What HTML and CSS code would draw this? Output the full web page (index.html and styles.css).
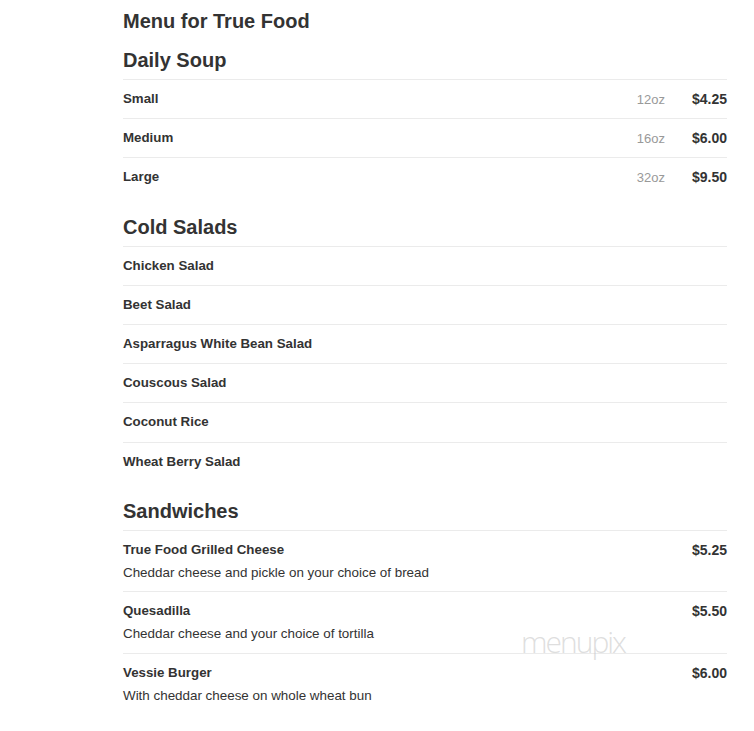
FILE: index.html
```html
<!DOCTYPE html>
<html>
<head>
<meta charset="utf-8">
<link rel="stylesheet" href="styles.css">
</head>
<body>
<div class="page">
  <h1 class="title">Menu for True Food</h1>

  <section class="section first">
    <h2 class="sec-title">Daily Soup</h2>
    <div class="row"><span class="name">Small</span><span class="size">12oz</span><span class="price">$4.25</span></div>
    <div class="row"><span class="name">Medium</span><span class="size">16oz</span><span class="price">$6.00</span></div>
    <div class="row"><span class="name">Large</span><span class="size">32oz</span><span class="price">$9.50</span></div>
  </section>

  <section class="section">
    <h2 class="sec-title">Cold Salads</h2>
    <div class="row"><span class="name">Chicken Salad</span></div>
    <div class="row"><span class="name">Beet Salad</span></div>
    <div class="row"><span class="name">Asparragus White Bean Salad</span></div>
    <div class="row"><span class="name">Couscous Salad</span></div>
    <div class="row"><span class="name">Coconut Rice</span></div>
    <div class="row"><span class="name">Wheat Berry Salad</span></div>
  </section>

  <section class="section">
    <h2 class="sec-title">Sandwiches</h2>
    <div class="row tall">
      <div class="info"><div class="name">True Food Grilled Cheese</div><div class="desc">Cheddar cheese and pickle on your choice of bread</div></div>
      <span class="price">$5.25</span>
    </div>
    <div class="row tall">
      <div class="info"><div class="name">Quesadilla</div><div class="desc">Cheddar cheese and your choice of tortilla</div></div>
      <span class="price">$5.50</span>
    </div>
    <div class="row tall">
      <div class="info"><div class="name">Vessie Burger</div><div class="desc">With cheddar cheese on whole wheat bun</div></div>
      <span class="price">$6.00</span>
    </div>
  </section>

  <div class="watermark">menupix</div>
</div>
</body>
</html>
```

FILE: styles.css
```css
* { box-sizing: border-box; }
html, body { margin: 0; padding: 0; background: #fff; }
body {
  font-family: "Liberation Sans", Arial, sans-serif;
  color: #333;
}
.page {
  position: relative;
  width: 604px;
  margin-left: 123px;
  padding-top: 9px;
}
.title {
  margin: 0 0 15px 0;
  font-size: 20px;
  line-height: 24px;
  font-weight: bold;
  color: #333;
}
.section { margin-top: 18px; }
.section.first { margin-top: 0; }
.sec-title {
  margin: 0;
  padding-bottom: 7px;
  font-size: 20px;
  line-height: 24px;
  font-weight: bold;
  color: #333;
}
.row {
  display: flex;
  align-items: center;
  border-top: 1px solid #ebebeb;
  height: 39.2px;
  padding: 0;
}
.row.tall {
  align-items: flex-start;
  height: 61.5px;
  padding-top: 11px;
}
.name {
  font-size: 13.3px;
  font-weight: bold;
  line-height: 16px;
  flex: 1;
}
.info { flex: 1; }
.desc {
  font-size: 13.4px;
  line-height: 16px;
  margin-top: 7px;
  color: #333;
}
.size {
  font-size: 13px;
  color: #999;
  margin-right: 27px;
}
.price {
  font-size: 14px;
  font-weight: bold;
  line-height: 16px;
}
.watermark {
  position: absolute;
  left: 398px;
  top: 627px;
  font-family: "Open Sans", sans-serif;
  font-weight: 300;
  font-size: 30px;
  line-height: 30px;
  letter-spacing: -2px;
  color: rgba(200,200,200,0.6);
  pointer-events: none;
}
```
